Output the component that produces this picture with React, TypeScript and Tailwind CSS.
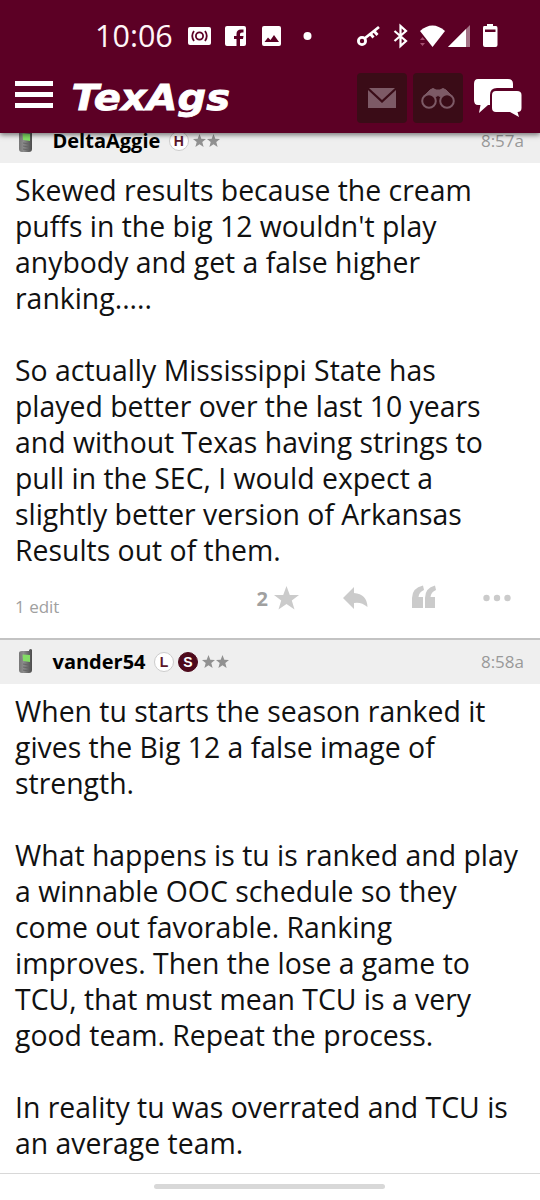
import type { ReactNode } from "react";

const PhoneIcon = () => (
    <svg width="16" height="26" viewBox="0 0 16 26">
        <defs>
            <linearGradient id="phone" x1="0" x2="1">
                <stop offset="0" stopColor="#777" />
                <stop offset="0.35" stopColor="#8c8c8c" />
                <stop offset="1" stopColor="#4c4c4c" />
            </linearGradient>
        </defs>
        <path d="M1 4Q1 2 4 2H11V1Q13-1 14 1V21Q14 24 11 24H4Q1 24 1 21Z" fill="url(#phone)" />
        <path d="M4.5 5.5L12 6V13L5 12Z" fill="#83dd65" />
        <path d="M5 15L11 16M5 18L11 19M5 21L11 22" stroke="#666" strokeWidth="1" />
    </svg>
);

const Stars = () => (
    <svg width="27" height="14" viewBox="0 0 27 14" fill="#919191">
        <path d="M6.5 0L8.3 4.8L13 5L9.3 8.1L10.6 13L6.5 10.2L2.4 13L3.7 8.1L0 5L4.7 4.8Z" />
        <path d="M20.5 0L22.3 4.8L27 5L23.3 8.1L24.6 13L20.5 10.2L16.4 13L17.7 8.1L14 5L18.7 4.8Z" />
    </svg>
);

const Badge = ({ letter, filled }: { letter: string; filled?: boolean }) => (
    <span className={`flex items-center justify-center w-5 h-5 mr-1 rounded-full border font-['Liberation_Sans',sans-serif] text-[14px] leading-none font-bold ${filled ? "bg-[#4e0a1c] border-[#4e0a1c] text-white" : "bg-white border-[#ccc] text-[#5a1628]"}`}>
        {letter}
    </span>
);

const PostHeader = ({ name, time, children }: { name: string; time: string; children: ReactNode }) => (
    <div className="flex items-center h-[46px] pl-[18px] pr-4 border-t-2 border-[#c3c3c3] bg-[#efefef]">
        <PhoneIcon />
        <h2 className="ml-[18.5px] mr-[8.5px] text-[20px] font-bold text-black">{name}</h2>
        {children}
        <Stars />
        <span className="ml-auto text-[17px] text-[#999]">{time}</span>
    </div>
);

const StatusBar = () => (
    <div className="flex items-center h-[72px] pl-[95px]">
        <span className="w-[93px] -mt-px text-[30.5px] leading-none text-[#fff5f7]">10:06</span>
        <svg width="352" height="30" viewBox="188 21 352 30" fill="#fff">
            <rect x="188" y="27" width="23" height="18" rx="2" />
            <g fill="none" stroke="#5c0025" strokeWidth="1.8">
                <circle cx="199.5" cy="36" r="3.6" />
                <path d="M194 31Q190.500 36 194 41M205 31Q208.500 36 205 41" />
            </g>
            <path d="M227 26H244Q246 26 246 28V44Q246 46 244 46H240V39H243L243.500 36H240V34Q240 32.500 242 32.500H243.500V29.500H241Q236.500 29.500 236.500 34V36H234V39H236.500V46H227Q225 46 225 44V28Q225 26 227 26Z" />
            <rect x="262" y="26" width="19" height="20" rx="2" />
            <path d="M264.500 42L268 37.500L270.500 40L274 35L279 42Z" fill="#5c0025" />
            <circle cx="307.500" cy="36" r="4" />
            <g fill="none" stroke="#fff" strokeWidth="2.800">
                <circle cx="362" cy="41" r="3.600" />
                <path d="M364.500 38.500L379 27M374 31L377.500 35M370.500 34L373.500 37.500" />
                <path d="M394.500 31L406 41L400.500 46V26L406 31L394.500 41" strokeWidth="2.200" />
            </g>
            <path d="M420 31Q432.500 20 445 31L432.500 47Z" />
            <path d="M470 25V47H448Z" opacity=".45" />
            <path d="M466 29V47H448Z" />
            <path d="M420 40L422.500 37L425 40ZM420 43L422.500 46L425 43Z" fill="#a44f70" />
            <path d="M484 26H487V24H493V26H496Q497.500 26 497.500 28V45Q497.500 47 495.500 47H485Q483 47 483 45V28Q483 26 484 26Z" />
            <path d="M485 29.500H495.500V32H485Z" fill="#5c0025" />
        </svg>
    </div>
);

const NavBar = () => (
    <div className="flex h-[61px] pl-[15px] pr-[18px]">
        <div className="flex flex-col gap-[6px] w-[38px] mt-[9px]">
            <span className="h-[5px] bg-white" />
            <span className="h-[5px] bg-white" />
            <span className="h-[5px] bg-white" />
        </div>
        <svg className="ml-[18px]" width="162" height="50" viewBox="71 72 162 50">
            <text x="71.500" y="109.500" textLength="158.500" lengthAdjust="spacingAndGlyphs" fill="#fff" stroke="#fff" strokeWidth=".8" fontFamily="DejaVu Sans, sans-serif" fontSize="36" fontWeight="700" fontStyle="italic">TexAgs</text>
        </svg>
        <div className="flex items-center justify-center w-[50px] h-[50px] mt-px ml-auto rounded bg-[#3a0c17]">
            <svg className="-ml-px" width="28" height="20" viewBox="0 0 28 20" fill="#7d5a66">
                <path d="M1 0H27L14 12Z" />
                <path d="M0 2L14 15L28 2V20H0Z" />
            </svg>
        </div>
        <div className="flex items-center justify-center w-[50px] h-[50px] mt-px ml-[6px] rounded bg-[#3a0c17]">
            <svg className="-ml-px" width="34" height="22" viewBox="0 0 34 22" fill="none" stroke="#7d5a66" strokeWidth="2">
                <circle cx="8" cy="14" r="6.800" />
                <circle cx="26" cy="14" r="6.800" />
                <path d="M3 9L9 3Q12 0 15 3H19Q22 0 25 3L31 9Q25 5 20 10Q17 7 14 10Q9 5 3 9Z" fill="#7d5a66" strokeWidth="1" />
            </svg>
        </div>
        <svg className="ml-[10px] mt-[5px]" width="49" height="42" viewBox="473 77 49 42" fill="#fff">
            <path d="M478 79H508Q513 79 513 84V88H497Q490 88 490 95V105H488L479 113L480.500 105H478Q474 105 474 100V84Q474 79 478 79Z" />
            <path d="M496 91H517Q521.500 91 521.500 95V108Q521.500 112 517.500 112L519 117L510 112H496Q492 112 492 108V95Q492 91 496 91Z" />
        </svg>
    </div>
);

const App = () => {
    return (
        <div className="h-[1200px] flex flex-col overflow-hidden bg-white font-['Open_Sans',sans-serif]">
            <header className="relative z-10 shrink-0 bg-[#5c0025] shadow-[0_2px_5px_rgba(0,0,0,0.5)]">
                <StatusBar />
                <NavBar />
            </header>

            <main className="-mt-4 text-[#111]">
                <article>
                    <PostHeader name="DeltaAggie" time="8:57a">
                        <Badge letter="H" />
                    </PostHeader>
                    <p className="h-[405px] pt-[9px] pl-[15px] text-[28.4px] leading-[36px] whitespace-nowrap">
                        Skewed results because the cream<br />
                        puffs in the big 12 wouldn't play<br />
                        anybody and get a false higher<br />
                        ranking.....<br /><br />
                        So actually Mississippi State has<br />
                        played better over the last 10 years<br />
                        and without Texas having strings to<br />
                        pull in the SEC, I would expect a<br />
                        slightly better version of Arkansas<br />
                        Results out of them.
                    </p>
                    <div className="flex h-[70px] pl-[15px] pr-[23px] text-[#a0a0a0]">
                        <span className="mt-[27px] text-[17px] leading-6">1 edit</span>
                        <span className="ml-auto mt-[18px] text-[20px] leading-[26px] font-bold">2</span>
                        <svg className="mt-[17px] ml-[5px]" width="244" height="28" viewBox="273 585 244 28" fill="#cbcbcb">
                            <path d="M286.500 586L289.800 595H299L291.800 600.500L294.500 609.500L286.500 604L278.500 609.500L281.200 600.500L274 595H283.200Z" />
                            <path d="M343 598L354 587V593Q367 594 367.500 607Q361 601.500 354 603V609Z" />
                            <path d="M423 585.500L424 590Q419 592 418.500 597H423V608H412V598Q412 588 423 585.500ZM435 585.500L436 590Q431 592 430.500 597H435V608H425V598Q425 588 435 585.500Z" />
                            <circle cx="486.500" cy="598" r="3.200" />
                            <circle cx="497" cy="598" r="3.200" />
                            <circle cx="507.500" cy="598" r="3.200" />
                        </svg>
                    </div>
                </article>

                <article>
                    <PostHeader name="vander54" time="8:58a">
                        <Badge letter="L" />
                        <Badge letter="S" filled />
                    </PostHeader>
                    <p className="h-[489px] pt-[9px] pl-[15px] text-[28.4px] leading-[36px] whitespace-nowrap">
                        When tu starts the season ranked it<br />
                        gives the Big 12 a false image of<br />
                        strength.<br /><br />
                        What happens is tu is ranked and play<br />
                        a winnable OOC schedule so they<br />
                        come out favorable. Ranking<br />
                        improves. Then the lose a game to<br />
                        TCU, that must mean TCU is a very<br />
                        good team. Repeat the process.<br /><br />
                        In reality tu was overrated and TCU is<br />
                        an average team.
                    </p>
                </article>
            </main>

            <footer className="flex-1 border-t border-[#d8d8d8] bg-white">
                <div className="w-[231px] h-[5px] mt-[10px] ml-[154px] rounded-full bg-[#d8d8d8]" />
            </footer>
        </div>
    );
};

export default App;
